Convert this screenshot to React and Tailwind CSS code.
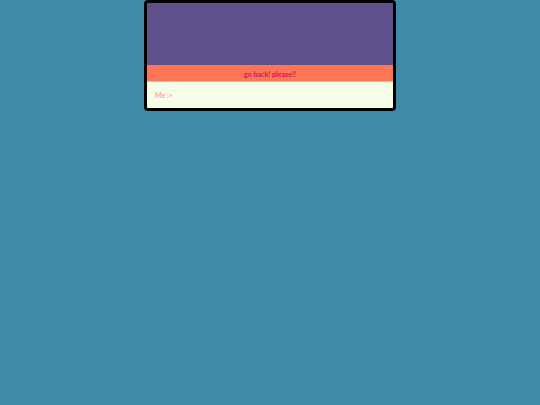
export default function App() {
  return (
    <div className="w-[540px] h-[405px] bg-[#3f8ba7] flex justify-center" style={{ fontFamily: "Lato, 'Noto Sans', sans-serif" }}>
      <div className="w-[252px] h-[111px] border-[3px] border-black rounded-[4px] overflow-hidden flex flex-col">
        <div className="h-[62px] bg-[#5f4f8b]" />
        <div className="h-[17px] bg-[#ff7656] flex items-center justify-center pt-[2px] border-b border-[#ffb49a]">
          <span className="text-[7px] font-black text-[#c72552] leading-none">go back! please!!</span>
        </div>
        <div className="flex-1 bg-[#f5ffe7] flex items-center px-[8px] pt-[1px]">
          <span className="text-[7px] font-semibold text-[#f5a27f] leading-none">Me :&gt;</span>
        </div>
      </div>
    </div>
  );
}
